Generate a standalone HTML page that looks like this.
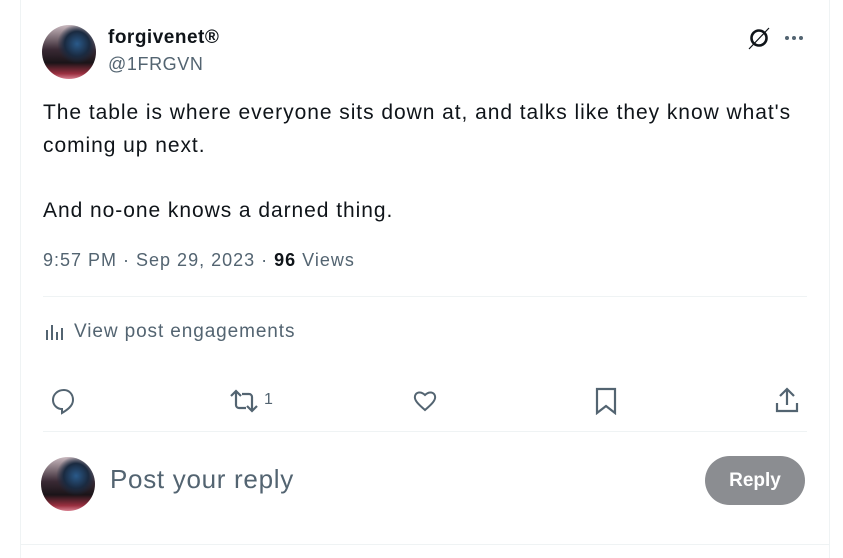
<!DOCTYPE html><html><head><style>
body{margin:0;width:843px;height:558px;background:#fff;font-family:"Liberation Sans",sans-serif;position:relative;overflow:hidden;color:#0f1419}
.a{position:absolute}
.av{border-radius:50%;background:radial-gradient(circle at 65% 35%,#2a5a8a 0,#1a2a40 25%,transparent 40%),linear-gradient(180deg,#c9b9bf 0,#3a2a35 45%,#1a1418 70%,#9a3040 90%,#d88090 100%);}
.g{color:#536471}
svg{position:absolute}
.d{width:4px;height:4px;border-radius:2px;background:#536471}
</style></head><body>
<div class="a" style="left:20px;top:0;width:1px;height:558px;background:#eff3f4"></div>
<div class="a" style="left:829px;top:0;width:1px;height:558px;background:#eff3f4"></div>
<div class="a" style="left:20px;top:544px;width:810px;height:1px;background:#eff3f4"></div>
<div class="a av" style="left:42px;top:25px;width:54px;height:54px"></div>
<div class="a" style="left:108px;top:27px;font-size:19px;font-weight:bold;letter-spacing:0.5px;line-height:22px">forgivenet<span style="font-size:19px">®</span></div>
<div class="a g" style="left:108px;top:54px;font-size:18px;letter-spacing:0.6px">@1FRGVN</div>
<svg style="left:746px;top:25px" width="26" height="26" viewBox="0 0 26 26"><circle cx="13" cy="13" r="7.5" fill="none" stroke="#0f1419" stroke-width="2.6"/><line x1="3" y1="24" x2="23" y2="3" stroke="#0f1419" stroke-width="1.2"/></svg>
<div class="a" style="left:785px;top:36px;display:flex;gap:3px"><div class="d"></div><div class="d"></div><div class="d"></div></div>
<div class="a" style="left:43px;top:97px;font-size:21px;line-height:32.5px;width:775px;letter-spacing:0.95px">The table is where everyone sits down at, and talks like they know what's coming up next.<br><br>And no-one knows a darned thing.</div>
<div class="a g" style="left:43px;top:250px;font-size:18px;letter-spacing:1px">9:57 PM · Sep 29, 2023 · <b style="color:#0f1419">96</b> Views</div>
<div class="a" style="left:43px;top:296px;width:764px;height:1px;background:#eff3f4"></div>
<svg style="left:44px;top:322px" width="20" height="20" viewBox="0 0 20 20" fill="#536471"><rect x="2" y="8" width="2" height="10"/><rect x="7" y="3" width="2" height="15"/><rect x="12" y="10" width="2" height="8"/><rect x="17" y="6" width="2" height="12"/></svg>
<div class="a g" style="left:74px;top:321px;font-size:19px;letter-spacing:0.9px">View post engagements</div>
<svg style="left:50px;top:387px" width="28" height="28" viewBox="0 0 28 28" fill="none" stroke="#536471" stroke-width="2"><path d="M14 3C7.5 3 3 7.5 3 13c0 5 4 9 9 9v4c5-3 11-7 11-13 0-6-4-10-9-10z"/></svg>
<svg style="left:229px;top:388px" width="30" height="26" viewBox="0 0 30 26" fill="none" stroke="#536471" stroke-width="2.2"><path d="M2 8l5-5 5 5M7 3v14a3 3 0 003 3h7M28 18l-5 5-5-5M23 23V9a3 3 0 00-3-3h-7"/></svg>
<div class="a g" style="left:264px;top:391px;font-size:16px">1</div>
<svg style="left:412px;top:388px" width="26" height="26" viewBox="0 0 26 26" fill="none" stroke="#536471" stroke-width="2"><path d="M13 22C6 16 2 12 3 8c1-4 6-5 10-1 4-4 9-3 10 1 1 4-3 8-10 14z"/></svg>
<svg style="left:593px;top:387px" width="26" height="28" viewBox="0 0 26 28" fill="none" stroke="#536471" stroke-width="2.2"><path d="M4 2h18v24l-9-7-9 7z"/></svg>
<svg style="left:774px;top:386px" width="26" height="28" viewBox="0 0 26 28" fill="none" stroke="#536471" stroke-width="2.2"><path d="M13 3v16M6 10l7-7 7 7M3 17v8h20v-8"/></svg>
<div class="a" style="left:43px;top:431px;width:764px;height:1px;background:#eff3f4"></div>
<div class="a av" style="left:41px;top:457px;width:54px;height:54px"></div>
<div class="a g" style="left:110px;top:464px;font-size:26px;letter-spacing:0.7px">Post your reply</div>
<div class="a" style="left:705px;top:456px;width:100px;height:49px;border-radius:25px;background:#8b8d91;color:#fff;font-weight:bold;font-size:19px;text-align:center;line-height:49px">Reply</div>
</body></html>
